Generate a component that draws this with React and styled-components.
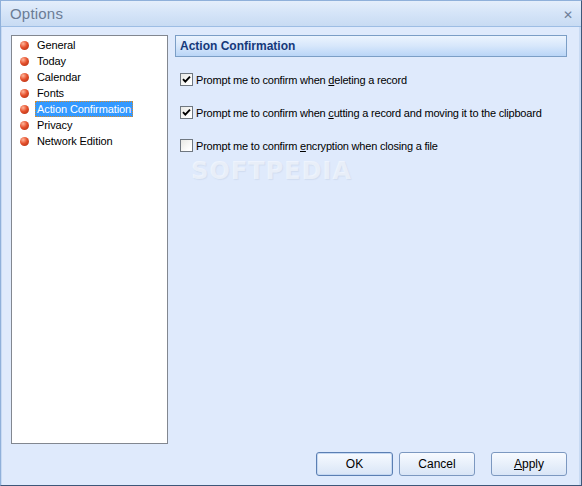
import React, { useState } from 'react'
import styled, { createGlobalStyle } from 'styled-components'

const GlobalStyle = createGlobalStyle`
  html, body {
    margin: 0;
    padding: 0;
    background: #dfeafc;
  }
  body {
    font-family: "Liberation Sans", Arial, sans-serif;
    font-size: 11px;
  }
`

const Window = styled.div`
  width: 582px;
  height: 486px;
  box-sizing: border-box;
  display: flex;
  flex-direction: column;
  border: 1px solid #3e5779;
  border-left-color: #8fb0da;
  border-top-color: #8fb0da;
  background: #dfeafc;
  position: relative;
  overflow: hidden;
`

const TitleBar = styled.div`
  height: 25px;
  flex: none;
  display: flex;
  align-items: center;
  justify-content: space-between;
  padding: 0 8px 0 9px;
  background: linear-gradient(to bottom, #e4eefb 0%, #d6e5f8 45%, #c8dbf3 100%);
  border-bottom: 1px solid #9dbde4;
`

const Title = styled.span`
  font-family: "Liberation Sans", Arial, sans-serif;
  font-size: 15px;
  color: #6b7c95;
  letter-spacing: 0.2px;
`

const CloseGlyph = styled.span`
  font-family: "DejaVu Sans", sans-serif;
  font-size: 12px;
  font-weight: bold;
  color: #6e7f98;
  margin-top: 2px;
`

const Body = styled.div`
  flex: 1;
  display: flex;
  flex-direction: column;
  padding: 8px 12px 9px 9px;
  border-left: 1px solid #c8daf3;
  border-right: 2px solid #c8daf3;
`

const Main = styled.div`
  height: 409px;
  display: flex;
  gap: 7px;
`

const ListPanel = styled.ul`
  width: 157px;
  flex: none;
  box-sizing: border-box;
  margin: 0;
  padding: 1px 0 0 0;
  list-style: none;
  background: #ffffff;
  border: 1px solid #828790;
`

const ListItem = styled.li`
  height: 16px;
  display: flex;
  align-items: center;
  padding-left: 8px;
  gap: 8px;
  color: #000;
  letter-spacing: -0.1px;
`

const Bullet = styled.span`
  width: 9px;
  height: 9px;
  border-radius: 50%;
  flex: none;
  background: radial-gradient(circle at 35% 30%, #ffb59a 0%, #e5502c 45%, #a82a0e 100%);
`

const ItemLabel = styled.span`
  padding: 1px 1px;
  line-height: 12px;
  border: 1px dotted ${p => (p.$selected ? '#d58a2a' : 'transparent')};
  background: ${p => (p.$selected ? '#3399ff' : 'transparent')};
  color: ${p => (p.$selected ? '#ffffff' : '#000000')};
  margin-left: -2px;
`

const ContentPanel = styled.div`
  flex: 1;
  display: flex;
  flex-direction: column;
`

const SectionHeader = styled.div`
  height: 22px;
  box-sizing: border-box;
  display: flex;
  align-items: center;
  padding-left: 4px;
  border: 1px solid #7b9ec6;
  background: linear-gradient(to bottom, #ecf4fe 0%, #d7e7fb 50%, #b9d5f7 100%);
  font-family: "Liberation Sans", Arial, sans-serif;
  font-weight: bold;
  font-size: 12px;
  color: #15397a;
`

const Options = styled.div`
  display: flex;
  flex-direction: column;
  gap: 20px;
  padding: 16px 0 0 5px;
`

const CheckRow = styled.label`
  display: flex;
  align-items: center;
  gap: 3px;
  height: 13px;
  color: #000;
  letter-spacing: -0.2px;
`

const Box = styled.span`
  width: 13px;
  height: 13px;
  box-sizing: border-box;
  border: 1px solid #6f7780;
  background: linear-gradient(135deg, #e8e8e4 0%, #ffffff 80%);
  display: flex;
  align-items: center;
  justify-content: center;
  flex: none;
`

const Footer = styled.div`
  margin-top: 8px;
  height: 24px;
  display: flex;
  justify-content: flex-end;
`

const Button = styled.button`
  width: ${p => p.$w || 76}px;
  height: 24px;
  margin-left: ${p => p.$gap || 0}px;
  box-sizing: border-box;
  border: 1px solid ${p => (p.$default ? '#5b7fb3' : '#7c98c0')};
  border-radius: 3px;
  background: linear-gradient(to bottom, #f7faff 0%, #e8f0fb 50%, #d9e5f6 100%);
  font-family: "Liberation Sans", Arial, sans-serif;
  font-size: 12px;
  color: #000;
  padding: 0;
  box-shadow: ${p => (p.$default ? 'inset 0 0 0 1px #c5d8f2' : 'none')};
`

const Watermark = styled.div`
  position: absolute;
  left: 190px;
  top: 156px;
  font-family: "DejaVu Sans", sans-serif;
  font-weight: bold;
  font-size: 24px;
  letter-spacing: 1px;
  color: rgba(255, 255, 255, 0.5);
  text-shadow: 1px 1px 1px rgba(160, 175, 200, 0.2);
  pointer-events: none;
`

const Check = () => (
  <svg width="9" height="9" viewBox="0 0 9 9">
    <path d="M1 4.2 L3.3 6.6 L8 1.6" fill="none" stroke="#000" strokeWidth="1.9" />
  </svg>
)

const items = ['General', 'Today', 'Calendar', 'Fonts', 'Action Confirmation', 'Privacy', 'Network Edition']

export default function App() {
  const [selected] = useState('Action Confirmation')
  const [checks, setChecks] = useState([true, true, false])

  const toggle = i => setChecks(c => c.map((v, j) => (j === i ? !v : v)))

  return (
    <>
      <GlobalStyle />
      <Window>
        <TitleBar>
          <Title>Options</Title>
          <CloseGlyph>✕</CloseGlyph>
        </TitleBar>
        <Body>
          <Main>
            <ListPanel>
              {items.map(name => (
                <ListItem key={name}>
                  <Bullet />
                  <ItemLabel $selected={name === selected}>{name}</ItemLabel>
                </ListItem>
              ))}
            </ListPanel>
            <ContentPanel>
              <SectionHeader>Action Confirmation</SectionHeader>
              <Options>
                <CheckRow onClick={() => toggle(0)}>
                  <Box>{checks[0] && <Check />}</Box>
                  <span>Prompt me to confirm when <u>d</u>eleting a record</span>
                </CheckRow>
                <CheckRow onClick={() => toggle(1)}>
                  <Box>{checks[1] && <Check />}</Box>
                  <span>Prompt me to confirm when <u>c</u>utting a record and moving it to the clipboard</span>
                </CheckRow>
                <CheckRow onClick={() => toggle(2)}>
                  <Box>{checks[2] && <Check />}</Box>
                  <span>Prompt me to confirm <u>e</u>ncryption when closing a file</span>
                </CheckRow>
              </Options>
            </ContentPanel>
          </Main>
          <Footer>
            <Button $default $w={77}>OK</Button>
            <Button $gap={6}>Cancel</Button>
            <Button $gap={16}><u>A</u>pply</Button>
          </Footer>
        </Body>
        <Watermark>SOFTPEDIA</Watermark>
      </Window>
    </>
  )
}
